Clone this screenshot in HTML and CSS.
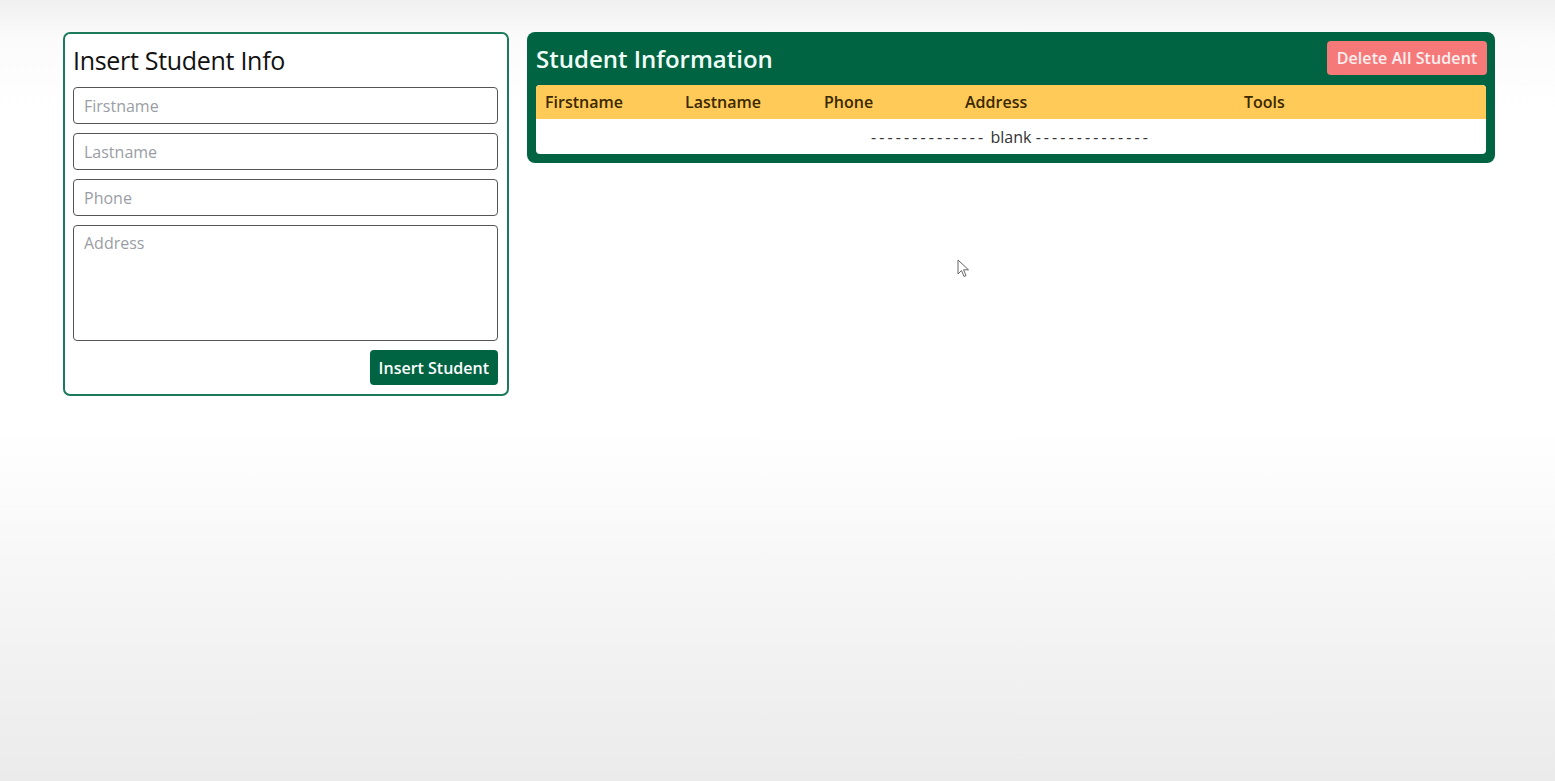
FILE: index.html
```html
<!DOCTYPE html>
<html>
<head>
<meta charset="utf-8">
<link rel="stylesheet" href="styles.css">
</head>
<body>
<div class="container">
  <form class="insert-card">
    <h2 class="insert-title">Insert Student Info</h2>
    <input class="field" type="text" placeholder="Firstname">
    <input class="field" type="text" placeholder="Lastname">
    <input class="field" type="text" placeholder="Phone">
    <textarea class="field area" placeholder="Address"></textarea>
    <div class="actions">
      <button type="button" class="btn-insert">Insert Student</button>
    </div>
  </form>
  <section class="info-card">
    <div class="info-head">
      <h2 class="info-title">Student Information</h2>
      <button type="button" class="btn-delete">Delete All Student</button>
    </div>
    <table class="table">
      <thead>
        <tr>
          <th class="c1">Firstname</th>
          <th class="c2">Lastname</th>
          <th class="c3">Phone</th>
          <th class="c4">Address</th>
          <th class="c5">Tools</th>
        </tr>
      </thead>
      <tbody>
        <tr><td colspan="5" class="blank"><span class="dash">--------------</span> blank <span class="dash">--------------</span></td></tr>
      </tbody>
    </table>
  </section>
</div>
<svg class="cursor" width="14" height="20" viewBox="0 0 14 20"><path d="M1 1 L1 15 L4.5 11.5 L7 17.5 L9 16.6 L6.6 10.8 L11.5 10.8 Z" fill="#fff" stroke="#666" stroke-width="1"/></svg>
</body>
</html>
```

FILE: styles.css
```css
html, body { height: 100%; }
body {
  margin: 0;
  font-family: "Open Sans", "Noto Sans", sans-serif;
  background: linear-gradient(to bottom, #f0f0f0 0px, #fbfbfb 40px, #ffffff 110px, #ffffff 430px, #f5f5f5 600px, #ebebeb 781px);
  position: relative;
}
.container {
  display: flex;
  align-items: flex-start;
  gap: 18px;
  padding: 32px 0 0 63px;
}
.insert-card {
  width: 446px;
  box-sizing: border-box;
  border: 2px solid #1b7a5c;
  border-radius: 7px;
  padding: 10px 9px 9px 8px;
  display: flex;
  flex-direction: column;
  gap: 10px;
  background: #fff;
}
.insert-title {
  margin: 0 0 1px 0;
  font-size: 25px;
  font-weight: 500;
  line-height: 32px;
  color: #111;
  letter-spacing: -0.3px;
}
.field {
  box-sizing: border-box;
  width: 425px;
  height: 37px;
  border: 1px solid #555;
  border-radius: 4px;
  padding: 0 10px;
  font-family: inherit;
  font-size: 16px;
  color: #222;
  background: #fff;
  margin: 0;
}
.field + .field { margin-top: -1px; }
.field::placeholder { color: #9a9ea4; }
.area {
  height: 116px;
  padding-top: 6px;
  resize: none;
  display: block;
}
.actions { display: flex; justify-content: flex-end; margin-top: -1px; }
.btn-insert {
  height: 35px;
  padding: 0 9px;
  border: none;
  border-radius: 4px;
  background: #006443;
  color: #fff;
  font-family: inherit;
  font-size: 16px;
  font-weight: 600;
  letter-spacing: 0;
}
.info-card {
  width: 968px;
  box-sizing: border-box;
  background: #006443;
  border-radius: 8px;
  padding: 9px 8px 9px 9px;
}
.info-head {
  display: flex;
  justify-content: space-between;
  align-items: center;
  height: 34px;
  margin-bottom: 10px;
}
.info-title {
  margin: 0;
  font-size: 24px;
  font-weight: 600;
  color: #f0fff8;
  letter-spacing: 0;
}
.btn-delete {
  height: 34px;
  width: 160px;
  border: none;
  border-radius: 4px;
  background: #f6797a;
  color: #fff0f0;
  font-family: inherit;
  font-size: 16px;
  font-weight: 600;
  letter-spacing: 0.1px;
  padding: 0;
}
.table {
  width: 950px;
  border-collapse: separate;
  border-spacing: 0;
  background: #fff;
  border-radius: 4px;
  overflow: hidden;
  table-layout: fixed;
}
.table th {
  box-sizing: border-box;
  background: #ffca57;
  color: #3a2800;
  text-align: left;
  font-size: 16px;
  font-weight: 600;
  height: 34px;
  padding: 0 9px;
  letter-spacing: 0;
}
.c1 { width: 140px; }
.c2 { width: 139px; }
.c3 { width: 141px; }
.c4 { width: 279px; }
.blank {
  text-align: center;
  height: 35px;
  padding: 0;
  font-size: 16px;
  color: #333;
}
.dash { letter-spacing: 3.1px; }
.cursor {
  position: absolute;
  left: 957px;
  top: 259px;
}
```
